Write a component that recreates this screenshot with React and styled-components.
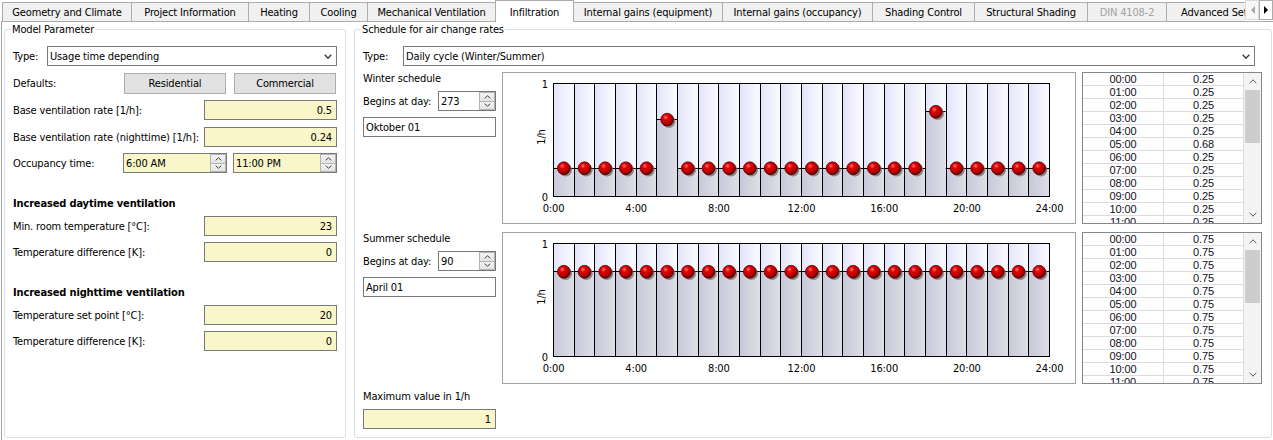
import React, { useId } from "react";
import styled, { createGlobalStyle } from "styled-components";

const UI_FONT = `"DejaVu Sans Condensed", "DejaVu Sans", "Liberation Sans", sans-serif`;
const GRID_FONT = `"Liberation Sans", Arial, sans-serif`;
const YELLOW = "#f9f6c9";
const FIELD_BORDER = "#7a7a7a";

const GlobalStyle = createGlobalStyle`
  html, body { margin: 0; padding: 0; background: #ffffff; }
  body { font-family: ${UI_FONT}; font-size: 11px; color: #000; }
  *, *::before, *::after { box-sizing: border-box; }
`;

const Window = styled.div`
  position: relative;
  width: 1273px;
  height: 440px;
  overflow: hidden;
  background: #fff;
  display: flex;
  flex-direction: column;
  font-family: ${UI_FONT};
  font-stretch: condensed;
  font-size: 11px;
  letter-spacing: -0.15px;
  color: #000;
`;

/* ---------- tabs ---------- */
const TabStrip = styled.div`
  position: relative;
  z-index: 1;
  flex: none;
  height: 21px;
  display: flex;
  align-items: flex-end;
  padding-left: 2px;
`;

const Tab = styled.div`
  flex: none;
  position: relative;
  z-index: ${(p) => (p.$active ? 2 : 1)};
  width: ${(p) => p.$w}px;
  height: ${(p) => (p.$active ? 22 : 19)}px;
  margin-left: -1px;
  margin-bottom: ${(p) => (p.$active ? -1 : 0)}px;
  &:first-child { margin-left: 0; }
  border: 1px solid #acacac;
  border-bottom: none;
  background: ${(p) => (p.$active ? "#ffffff" : "#f0f0f0")};
  color: ${(p) => (p.$disabled ? "#a3a3a3" : "#000")};
  display: flex;
  align-items: center;
  justify-content: center;
  padding-top: 1px;
  line-height: 13px;
  white-space: nowrap;
  overflow: hidden;
`;

const TabScroller = styled.div`
  position: absolute;
  z-index: 5;
  top: 0;
  right: 0;
  display: flex;
  height: 21px;
  background: #fff;
`;

const TabScrollButton = styled.div`
  width: 14px;
  height: 20px;
  border: 1px solid ${(p) => (p.$disabled ? "#dadada" : "#acacac")};
  background: ${(p) => (p.$disabled ? "#f7f7f7" : "#ffffff")};
  display: flex;
  align-items: center;
  justify-content: center;
`;

/* ---------- page / group boxes ---------- */
const Page = styled.div`
  flex: 1;
  display: flex;
  gap: 8px;
  margin-left: 1px;
  border-top: 1px solid #acacac;
  border-left: 1px solid #a0a0a0;
  padding: 1px 1px 2px 2px;
  background: #fff;
`;

const GroupBox = styled.fieldset`
  margin: 0;
  min-width: 0;
  width: ${(p) => (p.$w ? `${p.$w}px` : "auto")};
  flex: ${(p) => (p.$w ? "none" : "1")};
  padding: 0 ${(p) => p.$pr}px 0 8px;
  border: 1px solid #d5dfe5;
  border-radius: 3px;
  display: flex;
  flex-direction: column;
`;

const Legend = styled.legend`
  padding: 0 1px;
  margin-left: -2px;
  line-height: 13px;
  font-size: 11px;
`;

/* ---------- form parts ---------- */
const Row = styled.div`
  flex: none;
  display: flex;
  align-items: center;
  height: ${(p) => p.$h ?? 20}px;
  margin-top: ${(p) => p.$mt ?? 6}px;
  padding-right: ${(p) => p.$pr ?? 0}px;
`;

const Label = styled.span`
  flex: ${(p) => (p.$w ? "none" : "1")};
  width: ${(p) => (p.$w ? `${p.$w}px` : "auto")};
  white-space: nowrap;
  line-height: 13px;
`;

const Heading = styled.div`
  flex: none;
  margin-top: ${(p) => p.$mt}px;
  font-weight: bold;
  line-height: 13px;
`;

const Caption = styled.div`
  flex: none;
  margin-top: ${(p) => p.$mt ?? 0}px;
  line-height: 13px;
  white-space: nowrap;
`;

const NumberField = styled.div`
  flex: none;
  width: ${(p) => p.$w}px;
  height: ${(p) => p.$h ?? 20}px;
  margin-top: ${(p) => p.$mt ?? 0}px;
  border: 1px solid ${FIELD_BORDER};
  background: ${YELLOW};
  display: flex;
  align-items: center;
  justify-content: flex-end;
  padding-right: 4px;
`;

const TextBox = styled.div`
  flex: none;
  height: 20px;
  margin-top: 6px;
  border: 1px solid ${FIELD_BORDER};
  background: #fff;
  display: flex;
  align-items: center;
  padding-left: 2px;
`;

const Select = styled.div`
  flex: 1;
  height: 100%;
  margin-right: ${(p) => p.$mr ?? 0}px;
  border: 1px solid ${FIELD_BORDER};
  background: #fff;
  display: flex;
  align-items: center;
  padding: 0 4px 0 2px;
`;

const SelectText = styled.span`
  flex: 1;
  white-space: nowrap;
`;

const Button = styled.button`
  flex: none;
  width: 102px;
  height: 100%;
  margin-left: ${(p) => p.$ml ?? 0}px;
  padding: 0;
  border: 1px solid #adadad;
  background: #e1e1e1;
  font: inherit;
  letter-spacing: inherit;
  color: #000;
`;

const SpinBox = styled.div`
  flex: none;
  width: ${(p) => p.$w}px;
  height: 100%;
  margin-left: ${(p) => p.$ml ?? 0}px;
  border: 1px solid ${FIELD_BORDER};
  background: ${(p) => (p.$yellow ? YELLOW : "#fff")};
  display: flex;
  align-items: stretch;
`;

const SpinText = styled.span`
  flex: 1;
  display: flex;
  align-items: center;
  padding-left: 2px;
  white-space: nowrap;
`;

const SpinButtons = styled.div`
  flex: none;
  width: 16px;
  display: flex;
  flex-direction: column;
`;

const SpinButton = styled.div`
  flex: 1;
  border: 1px solid #b4b4b4;
  background: linear-gradient(#f4f4f4, #e3e3e3);
  display: flex;
  align-items: center;
  justify-content: center;
  & + & { border-top: none; }
`;

/* ---------- schedule ---------- */
const ScheduleRow = styled.div`
  flex: none;
  display: flex;
  gap: 6px;
  height: 152px;
  margin-top: ${(p) => p.$mt}px;
`;

const SideColumn = styled.div`
  flex: none;
  width: 133px;
  display: flex;
  flex-direction: column;
`;

const ChartFrame = styled.div`
  flex: none;
  width: 574px;
  border: 1px solid #a0a0a0;
  background: #fff;
  svg { display: block; }
`;

const TableBox = styled.div`
  flex: none;
  width: 180px;
  border: 1px solid #828790;
  background: #fff;
  display: flex;
  overflow: hidden;
`;

const TableGrid = styled.div`
  flex: 1;
  display: grid;
  grid-template-columns: 81px 80px;
  grid-auto-rows: 13px;
  align-content: start;
  overflow: hidden;
  font-family: ${GRID_FONT};
  font-size: 11px;
`;

const Cell = styled.div`
  border-bottom: 1px solid #dcdcdc;
  border-right: 1px solid #dcdcdc;
  text-align: center;
  line-height: 12px;
  color: #101020;
  overflow: hidden;
`;

const ScrollBar = styled.div`
  flex: none;
  width: 17px;
  display: flex;
  flex-direction: column;
  background: #f4f4f4;
`;

const ScrollArrow = styled.div`
  flex: none;
  height: 17px;
  display: flex;
  align-items: center;
  justify-content: center;
`;

const ScrollThumb = styled.div`
  flex: none;
  height: 53px;
  margin: 0 1px;
  background: #cdcdcd;
`;

const ScrollTrack = styled.div`
  flex: 1;
`;

/* ---------- small drawings ---------- */
const Chevron = ({ up, w = 8, h = 5, color = "#3c3c3c", sw = 1.4 }) => (
  <svg width={w} height={h} viewBox={`0 0 ${w} ${h}`}>
    <polyline
      points={
        up
          ? `0.7,${h - 0.7} ${w / 2},0.8 ${w - 0.7},${h - 0.7}`
          : `0.7,0.7 ${w / 2},${h - 0.8} ${w - 0.7},0.7`
      }
      fill="none"
      stroke={color}
      strokeWidth={sw}
    />
  </svg>
);

const Spinner = () => (
  <SpinButtons>
    <SpinButton>
      <Chevron up w={7} h={4} sw={1} color="#404040" />
    </SpinButton>
    <SpinButton>
      <Chevron w={7} h={4} sw={1} color="#404040" />
    </SpinButton>
  </SpinButtons>
);

const Triangle = ({ dir, color }) => (
  <svg width="5" height="8" viewBox="0 0 5 8">
    <polygon points={dir === "left" ? "5,0 5,8 1,4" : "0,0 0,8 4,4"} fill={color} />
  </svg>
);

function ScheduleChart({ values }) {
  const uid = useId().replace(/[^a-zA-Z0-9]/g, "");
  const L = 50;
  const T = 10;
  const B = 123;
  const PW = 496;
  const bw = PW / 24;
  const yOf = (v) => B - v * (B - T);
  const px = (x) => Math.round(x) + 0.5;
  const textStyle = { fontFamily: UI_FONT, fontStretch: "condensed", fontSize: 11 };
  return (
    <ChartFrame>
      <svg width="572" height="150" viewBox="0 0 572 150">
        <defs>
          <linearGradient id={`${uid}t`} x1="0" y1="0" x2="1" y2="0">
            <stop offset="0" stopColor="#e3e3f9" />
            <stop offset="1" stopColor="#fbfbff" />
          </linearGradient>
          <linearGradient id={`${uid}b`} x1="0" y1="0" x2="1" y2="0">
            <stop offset="0" stopColor="#c7c7d9" />
            <stop offset="1" stopColor="#dedee6" />
          </linearGradient>
          <radialGradient id={`${uid}r`} cx="0.38" cy="0.32" r="0.72">
            <stop offset="0" stopColor="#ff7a7a" />
            <stop offset="0.28" stopColor="#e40000" />
            <stop offset="0.75" stopColor="#aa0000" />
            <stop offset="1" stopColor="#5c0000" />
          </radialGradient>
        </defs>
        {values.map((v, i) => {
          const x0 = L + i * bw;
          const yv = yOf(v);
          return (
            <g key={`bar${i}`}>
              <rect x={x0} y={T} width={bw} height={yv - T} fill={`url(#${uid}t)`} />
              <rect x={x0} y={yv} width={bw} height={B + 1 - yv} fill={`url(#${uid}b)`} />
            </g>
          );
        })}
        {Array.from({ length: 25 }, (_, i) => (
          <line
            key={`v${i}`}
            x1={px(L + i * bw)}
            x2={px(L + i * bw)}
            y1={T}
            y2={B + 1}
            stroke="#000"
            strokeWidth="1"
          />
        ))}
        {values.map((v, i) => (
          <line
            key={`h${i}`}
            x1={L + i * bw}
            x2={L + (i + 1) * bw}
            y1={px(yOf(v))}
            y2={px(yOf(v))}
            stroke="#000"
            strokeWidth="1"
          />
        ))}
        <line x1={L} x2={L + PW + 1} y1={T + 0.5} y2={T + 0.5} stroke="#000" />
        <line x1={L} x2={L + PW + 1} y1={B + 0.5} y2={B + 0.5} stroke="#000" />
        {values.map((v, i) => {
          const cx = L + (i + 0.5) * bw + 0.5;
          const cy = yOf(v) + 0.5;
          return (
            <g key={`ball${i}`}>
              <circle cx={cx + 1.8} cy={cy + 1.8} r="6.4" fill="#6e6e6e" opacity="0.75" />
              <circle cx={cx} cy={cy} r="6.4" fill={`url(#${uid}r)`} stroke="#3a0000" strokeWidth="0.7" />
            </g>
          );
        })}
        <text x="45" y={T + 1} textAnchor="end" dominantBaseline="central" style={textStyle}>
          1
        </text>
        <text x="45" y={B + 1} textAnchor="end" dominantBaseline="central" style={textStyle}>
          0
        </text>
        <text
          x="0"
          y="0"
          textAnchor="middle"
          dominantBaseline="central"
          transform="translate(38.5 64) rotate(-90)"
          style={textStyle}
        >
          1/h
        </text>
        {[0, 4, 8, 12, 16, 20, 24].map((h) => (
          <text
            key={`x${h}`}
            x={L + (h / 24) * PW + 0.5}
            y="135.5"
            textAnchor="middle"
            dominantBaseline="central"
            style={textStyle}
          >
            {`${h}:00`}
          </text>
        ))}
      </svg>
    </ChartFrame>
  );
}

function ValueTable({ values }) {
  return (
    <TableBox>
      <TableGrid>
        {values.map((v, i) => (
          <React.Fragment key={i}>
            <Cell>{`${String(i).padStart(2, "0")}:00`}</Cell>
            <Cell>{v.toFixed(2)}</Cell>
          </React.Fragment>
        ))}
      </TableGrid>
      <ScrollBar>
        <ScrollArrow>
          <Chevron up w={8} h={5} sw={1} color="#606060" />
        </ScrollArrow>
        <ScrollThumb />
        <ScrollTrack />
        <ScrollArrow>
          <Chevron w={8} h={5} sw={1} color="#606060" />
        </ScrollArrow>
      </ScrollBar>
    </TableBox>
  );
}

function Schedule({ title, day, date, values, mt }) {
  return (
    <ScheduleRow $mt={mt}>
      <SideColumn>
        <Caption>{title}</Caption>
        <Row $mt={6}>
          <Label>Begins at day:</Label>
          <SpinBox $w={58}>
            <SpinText>{day}</SpinText>
            <Spinner />
          </SpinBox>
        </Row>
        <TextBox>{date}</TextBox>
      </SideColumn>
      <ScheduleChart values={values} />
      <ValueTable values={values} />
    </ScheduleRow>
  );
}

const TABS = [
  { label: "Geometry and Climate", w: 130 },
  { label: "Project Information", w: 118 },
  { label: "Heating", w: 62 },
  { label: "Cooling", w: 59 },
  { label: "Mechanical Ventilation", w: 129 },
  { label: "Infiltration", w: 79, active: true },
  { label: "Internal gains (equipment)", w: 150 },
  { label: "Internal gains (occupancy)", w: 151 },
  { label: "Shading Control", w: 103 },
  { label: "Structural Shading", w: 114 },
  { label: "DIN 4108-2", w: 80, disabled: true },
  { label: "Advanced Settings", w: 120 },
];

const winter = Array.from({ length: 24 }, (_, i) => (i === 5 ? 0.68 : i === 18 ? 0.75 : 0.25));
const summer = Array.from({ length: 24 }, () => 0.75);

export default function App() {
  return (
    <>
      <GlobalStyle />
      <Window>
        <TabStrip>
          {TABS.map((t) => (
            <Tab key={t.label} $w={t.w} $active={t.active} $disabled={t.disabled}>
              {t.label}
            </Tab>
          ))}
          <TabScroller>
            <TabScrollButton $disabled>
              <Triangle dir="left" color="#a8a8a8" />
            </TabScrollButton>
            <TabScrollButton>
              <Triangle dir="right" color="#000" />
            </TabScrollButton>
          </TabScroller>
        </TabStrip>

        <Page>
          <GroupBox $w={342} $pr={8}>
            <Legend>Model Parameter</Legend>
            <Row $mt={10}>
              <Label $w={34}>Type:</Label>
              <Select>
                <SelectText>Usage time depending</SelectText>
                <Chevron />
              </Select>
            </Row>
            <Row $mt={7} $h={21} $pr={1}>
              <Label>Defaults:</Label>
              <Button>Residential</Button>
              <Button $ml={8}>Commercial</Button>
            </Row>
            <Row $mt={6}>
              <Label>Base ventilation rate [1/h]:</Label>
              <NumberField $w={133}>0.5</NumberField>
            </Row>
            <Row $mt={7}>
              <Label>Base ventilation rate (nighttime) [1/h]:</Label>
              <NumberField $w={133}>0.24</NumberField>
            </Row>
            <Row $mt={6}>
              <Label>Occupancy time:</Label>
              <SpinBox $w={104} $yellow>
                <SpinText>6:00 AM</SpinText>
                <Spinner />
              </SpinBox>
              <SpinBox $w={104} $ml={6} $yellow>
                <SpinText>11:00 PM</SpinText>
                <Spinner />
              </SpinBox>
            </Row>

            <Heading $mt={24}>Increased daytime ventilation</Heading>
            <Row $mt={6}>
              <Label>Min. room temperature [°C]:</Label>
              <NumberField $w={133}>23</NumberField>
            </Row>
            <Row $mt={6}>
              <Label>Temperature difference [K]:</Label>
              <NumberField $w={133}>0</NumberField>
            </Row>

            <Heading $mt={24}>Increased nighttime ventilation</Heading>
            <Row $mt={6}>
              <Label>Temperature set point [°C]:</Label>
              <NumberField $w={133}>20</NumberField>
            </Row>
            <Row $mt={6}>
              <Label>Temperature difference [K]:</Label>
              <NumberField $w={133}>0</NumberField>
            </Row>
          </GroupBox>

          <GroupBox $pr={9}>
            <Legend>Schedule for air change rates</Legend>
            <Row $mt={10}>
              <Label $w={40}>Type:</Label>
              <Select $mr={7}>
                <SelectText>Daily cycle (Winter/Summer)</SelectText>
                <Chevron />
              </Select>
            </Row>
            <Schedule title="Winter schedule" day="273" date="Oktober 01" values={winter} mt={6} />
            <Schedule title="Summer schedule" day="90" date="April 01" values={summer} mt={8} />
            <Caption $mt={6}>Maximum value in 1/h</Caption>
            <NumberField $w={133} $mt={6}>1</NumberField>
          </GroupBox>
        </Page>
      </Window>
    </>
  );
}
